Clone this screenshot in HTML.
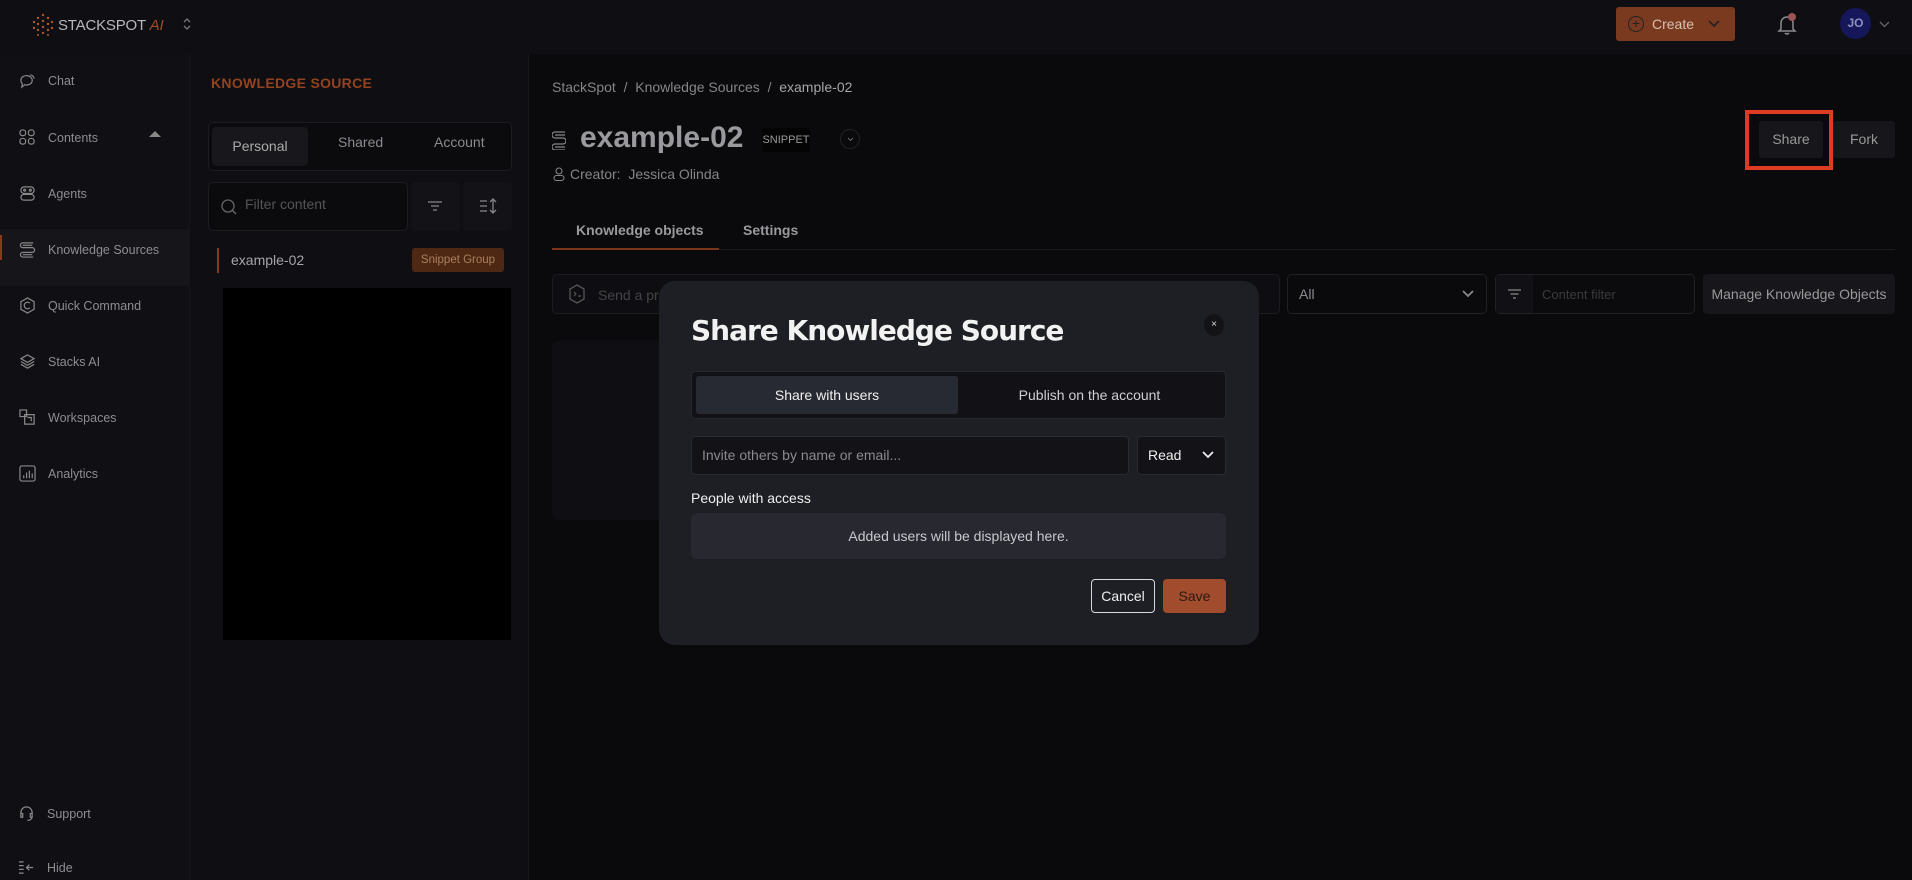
<!DOCTYPE html>
<html><head><meta charset="utf-8"><style>
*{box-sizing:border-box;margin:0;padding:0}
body{width:1912px;height:880px;background:#0a0a0d;font-family:"Liberation Sans",sans-serif;color:#8a8a90;position:relative;overflow:hidden;font-size:13px}
.a{position:absolute}
.hdr{left:0;top:0;width:1912px;height:54px;background:#0e0e13}
.side{left:0;top:54px;width:190px;height:826px;background:#0f0f14;border-right:1px solid #16161b}
.kp{left:190px;top:54px;width:339px;height:826px;background:#0e0e13;border-right:1px solid #16161b}
.nav{left:19px;font-size:12.5px;color:#8c8c92;display:flex;align-items:center;gap:12px}
.nav svg{width:17px;height:17px}
.box{border:1px solid #1c1c22;border-radius:5px}
</style></head><body>
<div class="a hdr"></div>
<svg class="a" style="left:32px;top:13px" width="22" height="24" viewBox="0 0 22 24"><g fill="#b0582c"><circle cx="11" cy="2" r="1.2"/><circle cx="6" cy="5" r="1.2"/><circle cx="16" cy="5" r="1.2"/><circle cx="2" cy="9" r="1.2"/><circle cx="11" cy="8" r="1.2"/><circle cx="20" cy="9" r="1.2"/><circle cx="6" cy="11" r="1.2"/><circle cx="16" cy="11" r="1.2"/><circle cx="2" cy="15" r="1.2"/><circle cx="11" cy="14" r="1.2"/><circle cx="20" cy="15" r="1.2"/><circle cx="6" cy="17" r="1.2"/><circle cx="16" cy="17" r="1.2"/><circle cx="11" cy="20" r="1.2"/><circle cx="6" cy="22" r="1"/><circle cx="16" cy="22" r="1"/></g></svg>
<div class="a" style="left:58px;top:17px;font-size:15px;letter-spacing:-0.2px;color:#b8b8bc;white-space:nowrap">STACKSPOT <span style="color:#a04a25;font-style:italic">AI</span></div>
<svg class="a" style="left:182px;top:16px" width="10" height="16"><path d="M2 6l3-3 3 3M2 10l3 3 3-3" stroke="#777" stroke-width="1.3" fill="none"/></svg>
<div class="a" style="left:1616px;top:7px;width:119px;height:34px;background:#7a3a20;border-radius:3px;color:#d8c0b0;font-size:14px;display:flex;align-items:center;padding-left:12px;gap:8px"><span style="width:16px;height:16px;border:1.5px solid #222;border-radius:50%;display:inline-block;text-align:center;line-height:12px;color:#222;font-size:14px">+</span>Create<svg style="margin-left:6px" width="12" height="8"><path d="M1 1l5 5 5-5" stroke="#222" stroke-width="1.6" fill="none"/></svg></div>
<svg class="a" style="left:1777px;top:12px" width="22" height="24" viewBox="0 0 22 24"><path d="M4 17V11a6 6 0 0 1 12 0v6l2 2H2z M8 21a2.5 2.5 0 0 0 4 0" fill="none" stroke="#8a8a90" stroke-width="1.5"/><circle cx="15" cy="5" r="4" fill="#9a5555"/></svg>
<div class="a" style="left:1840px;top:8px;width:31px;height:31px;border-radius:50%;background:#15175a;color:#8a90c0;font-weight:bold;font-size:12px;text-align:center;line-height:31px">JO</div>
<svg class="a" style="left:1879px;top:21px" width="11" height="7"><path d="M1 1l4.5 4.5L10 1" stroke="#666" stroke-width="1.3" fill="none"/></svg>

<div class="a side"></div>
<div class="a" style="left:0;top:229px;width:190px;height:57px;background:#15151a"></div>
<div class="a" style="left:0;top:235px;width:2px;height:25px;background:#8a3a1c"></div>
<div class="a nav" style="top:72px"><svg viewBox="0 0 18 18" fill="none" stroke="#888" stroke-width="1.3"><path d="M2 9a6 5 0 1 1 4 4.5L3 16l.5-3.5A5 5 0 0 1 2 9z"/><path d="M12 3a5 5 0 0 1 4 4"/></svg>Chat</div>
<div class="a nav" style="top:129px"><svg viewBox="0 0 18 18" fill="none" stroke="#888" stroke-width="1.3"><rect x="1" y="1" width="6" height="6" rx="2.5"/><rect x="10" y="1" width="6" height="6" rx="2.5"/><rect x="1" y="10" width="6" height="6" rx="2.5"/><rect x="10" y="10" width="6" height="6" rx="2.5"/></svg>Contents</div>
<div class="a" style="left:149px;top:131px;width:0;height:0;border-left:6px solid transparent;border-right:6px solid transparent;border-bottom:6px solid #888"></div>
<div class="a nav" style="top:185px"><svg viewBox="0 0 18 18" fill="none" stroke="#888" stroke-width="1.3"><rect x="2" y="2" width="14" height="7" rx="3.5"/><rect x="2" y="10" width="14" height="6" rx="3"/><circle cx="6" cy="5.5" r="1"/><circle cx="12" cy="5.5" r="1"/></svg>Agents</div>
<div class="a nav" style="top:241px"><svg viewBox="0 0 18 18" fill="none" stroke="#888" stroke-width="1.3"><path d="M4 2h11M4 2a2.5 2.5 0 0 0 0 5h10a2.5 2.5 0 0 1 0 5H4a2.5 2.5 0 0 0 0 5h11M4 4.5h10M4 14.5h10"/></svg>Knowledge Sources</div>
<div class="a nav" style="top:297px"><svg viewBox="0 0 18 18" fill="none" stroke="#888" stroke-width="1.3"><path d="M9 1l7 4v8l-7 4-7-4V5z"/><path d="M11.5 6.5a3.5 3.5 0 1 0 0 5"/></svg>Quick Command</div>
<div class="a nav" style="top:353px"><svg viewBox="0 0 18 18" fill="none" stroke="#888" stroke-width="1.3"><path d="M9 2l7 4-7 4-7-4z M2 9l7 4 7-4 M2 12l7 4 7-4"/></svg>Stacks AI</div>
<div class="a nav" style="top:409px"><svg viewBox="0 0 18 18" fill="none" stroke="#888" stroke-width="1.3"><path d="M1 1h7v7H1z M6 6h10v10H6z M9 9h4v4"/></svg>Workspaces</div>
<div class="a nav" style="top:465px"><svg viewBox="0 0 18 18" fill="none" stroke="#888" stroke-width="1.3"><rect x="1" y="1" width="16" height="16" rx="2"/><path d="M5 14v-3M8 14V8M11 14V6M14 14V9"/></svg>Analytics</div>
<div class="a nav" style="top:805px;left:18px"><svg viewBox="0 0 18 18" fill="none" stroke="#888" stroke-width="1.3"><path d="M3 11V8a6 6 0 0 1 12 0v3M3 9h2v4H3zM13 9h2v4h-2zM15 13a4 4 0 0 1-5 3"/></svg>Support</div>
<div class="a nav" style="top:859px;left:18px"><svg viewBox="0 0 18 18" fill="none" stroke="#888" stroke-width="1.3"><path d="M1 3h5M1 7h5M1 11h5M1 15h5M16 9H9M12 6L9 9l3 3"/></svg>Hide</div>

<div class="a kp"></div>
<div class="a" style="left:211px;top:75px;font-size:14px;font-weight:bold;color:#93431f;letter-spacing:0.3px">KNOWLEDGE SOURCE</div>
<div class="a box" style="left:208px;top:122px;width:304px;height:49px;background:#0b0b0e"></div>
<div class="a" style="left:212px;top:127px;width:96px;height:39px;background:#17171c;border-radius:4px;color:#aaa;font-size:14px;text-align:center;line-height:39px">Personal</div>
<div class="a" style="left:338px;top:134px;font-size:14px;color:#8a8a90">Shared</div>
<div class="a" style="left:434px;top:134px;font-size:14px;color:#8a8a90">Account</div>
<div class="a box" style="left:208px;top:182px;width:200px;height:49px;background:#0b0b0e"></div>
<svg class="a" style="left:221px;top:199px" width="16" height="16"><circle cx="7" cy="7" r="6" fill="none" stroke="#666" stroke-width="1.3"/><path d="M11 11l4 4" stroke="#666" stroke-width="1.3"/></svg>
<div class="a" style="left:245px;top:196px;font-size:14px;color:#555">Filter content</div>
<div class="a" style="left:411px;top:182px;width:49px;height:49px;background:#121217;border-radius:4px"></div>
<svg class="a" style="left:427px;top:199px" width="16" height="14"><path d="M1 3h14M4 7h8M6 11h4" stroke="#888" stroke-width="1.3"/></svg>
<div class="a" style="left:463px;top:182px;width:49px;height:49px;background:#121217;border-radius:4px"></div>
<svg class="a" style="left:479px;top:198px" width="18" height="16"><path d="M1 3h7M1 8h7M1 13h7M14 1v14M11 4l3-3 3 3M11 12l3 3 3-3" stroke="#888" stroke-width="1.3" fill="none"/></svg>
<div class="a" style="left:217px;top:248px;width:2px;height:25px;background:#8a3a1c"></div>
<div class="a" style="left:231px;top:252px;font-size:14px;color:#a5a5aa">example-02</div>
<div class="a" style="left:412px;top:248px;width:92px;height:24px;background:#4e2812;border-radius:3px;color:#a88060;font-size:11.5px;text-align:center;line-height:24px">Snippet Group</div>
<div class="a" style="left:223px;top:288px;width:288px;height:352px;background:#000"></div>

<div class="a" style="left:552px;top:79px;font-size:14px;color:#858589">StackSpot &nbsp;/&nbsp; Knowledge Sources &nbsp;/&nbsp; <span style="color:#a5a5a9">example-02</span></div>
<svg class="a" style="left:552px;top:130px" width="14" height="20"><path d="M3 2h10M3 2a3 3 0 0 0 0 6h8a3 3 0 0 1 0 6H3a3 3 0 0 0 0 6h10M3 5h10M3 17h10" stroke="#888" stroke-width="1.2" fill="none"/></svg>
<div class="a" style="left:580px;top:121px;font-size:30px;font-weight:bold;color:#9a9a9e">example-02</div>
<div class="a" style="left:762px;top:128px;width:48px;height:24px;background:#040405;border-radius:3px;font-size:11px;color:#999;text-align:center;line-height:24px">SNIPPET</div>
<div class="a" style="left:840px;top:129px;width:20px;height:20px;border:1px solid #222;border-radius:50%"></div>
<svg class="a" style="left:847px;top:137px" width="7" height="5"><path d="M1 1l2.5 2.5L6 1" stroke="#666" stroke-width="1" fill="none"/></svg>
<svg class="a" style="left:553px;top:167px" width="12" height="14"><circle cx="6" cy="4" r="3" fill="none" stroke="#858589" stroke-width="1.1"/><rect x="1" y="8.5" width="10" height="5" rx="2.5" fill="none" stroke="#858589" stroke-width="1.1"/></svg>
<div class="a" style="left:570px;top:166px;font-size:14px;color:#858589">Creator:&nbsp; Jessica Olinda</div>
<div class="a" style="left:576px;top:222px;font-size:14px;font-weight:bold;color:#9a9a9e">Knowledge objects</div>
<div class="a" style="left:743px;top:222px;font-size:14px;font-weight:bold;color:#9a9a9e">Settings</div>
<div class="a" style="left:552px;top:249px;width:1343px;height:1px;background:#1a1a1f"></div>
<div class="a" style="left:552px;top:248px;width:167px;height:2px;background:#7a3518"></div>
<div class="a" style="left:1745px;top:110px;width:88px;height:60px;border:4px solid #e03a22"></div>
<div class="a" style="left:1759px;top:121px;width:64px;height:37px;background:#16161b;border-radius:3px;color:#999;font-size:14px;text-align:center;line-height:37px">Share</div>
<div class="a" style="left:1833px;top:121px;width:62px;height:37px;background:#16161b;border-radius:3px;color:#999;font-size:14px;text-align:center;line-height:37px">Fork</div>
<div class="a box" style="left:552px;top:274px;width:728px;height:40px;background:#0e0e12"></div>
<div class="a" style="left:598px;top:287px;font-size:14px;color:#444">Send a pro</div>
<svg class="a" style="left:568px;top:284px" width="18" height="20"><path d="M9 1l7 4v10l-7 4-7-4V5z" fill="none" stroke="#555" stroke-width="1.3"/><path d="M6 8l2 2-2 2M10 12h3" stroke="#555" stroke-width="1.2" fill="none"/></svg>
<div class="a box" style="left:1287px;top:274px;width:200px;height:40px;border-color:#202026"></div>
<div class="a" style="left:1299px;top:286px;font-size:14px;color:#8a8a90">All</div>
<svg class="a" style="left:1462px;top:290px" width="12" height="8"><path d="M1 1l5 5 5-5" stroke="#888" stroke-width="1.8" fill="none"/></svg>
<div class="a box" style="left:1495px;top:274px;width:200px;height:40px;border-color:#202026;background:#0b0b0e"></div>
<div class="a" style="left:1496px;top:275px;width:37px;height:38px;background:#111115"></div>
<svg class="a" style="left:1507px;top:288px" width="15" height="12"><path d="M1 2h13M3.5 6h8M6 10h3" stroke="#888" stroke-width="1.3"/></svg>
<div class="a" style="left:1542px;top:287px;font-size:13px;color:#3a3a3e">Content filter</div>
<div class="a" style="left:1703px;top:274px;width:192px;height:40px;background:#16161b;border-radius:4px;color:#999;font-size:14px;text-align:center;line-height:40px">Manage Knowledge Objects</div>
<div class="a" style="left:552px;top:340px;width:120px;height:180px;background:#0f0f13;border-radius:8px"></div>

<div class="a" style="left:659px;top:281px;width:600px;height:364px;background:#1e1f24;border-radius:16px"></div>
<div class="a" style="left:691px;top:314px;font-size:28px;font-weight:bold;color:#f2f2f2;font-family:'DejaVu Sans','Liberation Sans',sans-serif;letter-spacing:-1px">Share Knowledge Source</div>
<div class="a" style="left:1204px;top:314px;width:20px;height:22px;border-radius:50%;background:#131317;color:#ddd;font-size:10px;text-align:center;line-height:22px">×</div>
<div class="a" style="left:691px;top:371px;width:535px;height:48px;background:#121216;border:1px solid #26272c;border-radius:4px"></div>
<div class="a" style="left:696px;top:376px;width:262px;height:38px;background:#282a33;border-radius:3px;color:#f0f0f0;font-size:14px;text-align:center;line-height:38px">Share with users</div>
<div class="a" style="left:958px;top:376px;width:263px;height:38px;color:#cfcfd2;font-size:14px;text-align:center;line-height:38px">Publish on the account</div>
<div class="a" style="left:691px;top:436px;width:438px;height:39px;background:#131317;border:1px solid #2a2b30;border-radius:4px;color:#8a8a8e;font-size:14px;line-height:37px;padding-left:10px">Invite others by name or email...</div>
<div class="a" style="left:1137px;top:436px;width:89px;height:39px;background:#131317;border:1px solid #2a2b30;border-radius:4px;color:#eee;font-size:14px;line-height:37px;padding-left:10px">Read</div>
<svg class="a" style="left:1202px;top:451px" width="12" height="8"><path d="M1 1l5 5 5-5" stroke="#eee" stroke-width="1.8" fill="none"/></svg>
<div class="a" style="left:691px;top:490px;font-size:14px;color:#f0f0f0">People with access</div>
<div class="a" style="left:691px;top:513px;width:535px;height:46px;background:#272830;border-radius:6px;color:#c8c8cc;font-size:14px;text-align:center;line-height:46px">Added users will be displayed here.</div>
<div class="a" style="left:1091px;top:579px;width:64px;height:34px;border:1px solid #d8d8d8;border-radius:4px;color:#eee;font-size:14px;text-align:center;line-height:32px">Cancel</div>
<div class="a" style="left:1163px;top:579px;width:63px;height:34px;background:#a14c2c;border-radius:4px;color:#2a1810;font-size:14px;text-align:center;line-height:34px">Save</div>
</body></html>
